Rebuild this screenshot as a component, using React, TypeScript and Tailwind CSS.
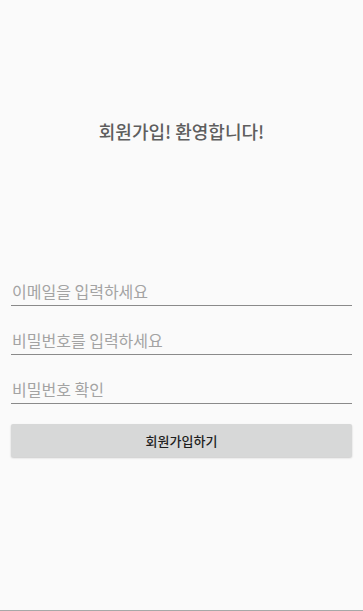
import React, { FC } from 'react';

const font = { fontFamily: '"Noto Sans CJK KR", "Noto Sans", sans-serif' };

const Field: FC<{ placeholder: string; type?: string }> = ({ placeholder, type = 'text' }) => (
    <input
        type={type}
        placeholder={placeholder}
        className="w-full h-[36px] bg-transparent border-b-[1.5px] border-[#8a8a8a] px-[1px] pt-[6px] text-[16px] text-[#333] placeholder:text-[#a3a3a3] outline-none"
        style={font}
    />
);

const App: FC = () => {
    return (
        <div className="w-[363px] h-[611px] bg-[#fafafa] border-b border-[#a8a8a8] flex flex-col px-[11px]" style={font}>
            <h1 className="mt-[118px] text-center text-[18px] font-medium text-[#5e5e5e] leading-[26px]">
                회원가입! 환영합니다!
            </h1>
            <div className="mt-[126px] flex flex-col gap-[13px]">
                <Field placeholder="이메일을 입력하세요" />
                <Field placeholder="비밀번호를 입력하세요" type="password" />
                <Field placeholder="비밀번호 확인" type="password" />
            </div>
            <button
                className="mt-[20px] h-[33px] w-full bg-[#d7d8d8] rounded-[2px] shadow-[0_1px_2px_rgba(0,0,0,0.2)] text-[13px] font-medium text-[#1e1e1e]"
            >
                회원가입하기
            </button>
        </div>
    );
};

export default App;
